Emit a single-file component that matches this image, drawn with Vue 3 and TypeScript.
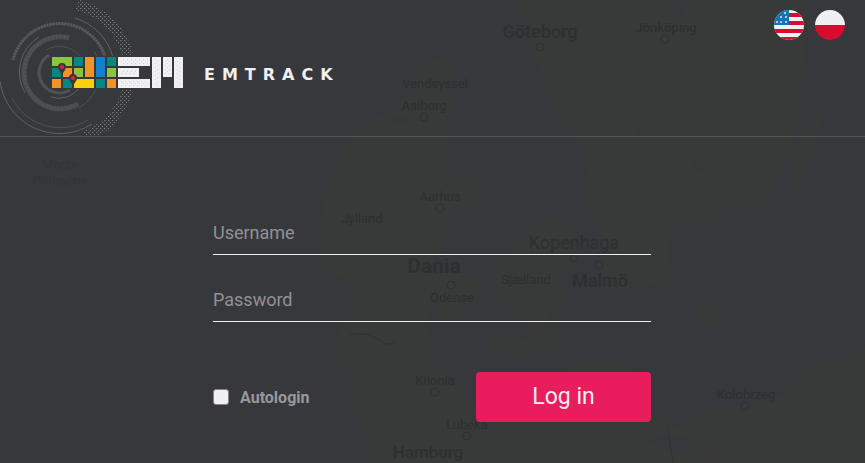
<script setup lang="ts">
import { ref } from 'vue'

interface MapLabel {
  name: string
  x: number
  y: number
  size: number
  weight: number
  faint?: boolean
}

interface Block {
  x: number
  y: number
  w: number
  h: number
  fill: string
}

const username = ref('')
const password = ref('')
const autologin = ref(false)
const language = ref<'en' | 'pl'>('en')

const labels: MapLabel[] = [
  { name: 'Göteborg', x: 540, y: 38, size: 18, weight: 500 },
  { name: 'Jönköping', x: 666, y: 32, size: 13, weight: 500 },
  { name: 'Vendsyssel', x: 435, y: 88, size: 13, weight: 400 },
  { name: 'Aalborg', x: 424, y: 110, size: 13, weight: 400 },
  { name: 'Aarhus', x: 440, y: 201, size: 13, weight: 400 },
  { name: 'Jylland', x: 362, y: 223, size: 13, weight: 400 },
  { name: 'Kopenhaga', x: 574, y: 249, size: 18, weight: 400 },
  { name: 'Dania', x: 434, y: 273, size: 21, weight: 700 },
  { name: 'Sjælland', x: 526, y: 284, size: 13, weight: 400 },
  { name: 'Malmö', x: 600, y: 287, size: 18, weight: 500 },
  { name: 'Odense', x: 452, y: 302, size: 13, weight: 400 },
  { name: 'Kilonia', x: 435, y: 385, size: 13, weight: 400 },
  { name: 'Kołobrzeg', x: 746, y: 399, size: 13, weight: 400 },
  { name: 'Lubeka', x: 467, y: 429, size: 13, weight: 400 },
  { name: 'Hamburg', x: 428, y: 458, size: 17, weight: 500 },
  { name: 'Morze', x: 60, y: 169, size: 13, weight: 400, faint: true },
  { name: 'Północne', x: 60, y: 185, size: 13, weight: 400, faint: true },
]

const towns: [number, number][] = [
  [540, 47], [665, 39], [424, 117], [440, 208], [574, 258], [599, 265],
  [451, 285], [435, 392], [745, 406], [467, 436],
]

const blocks: Block[] = [
  { x: 52, y: 57, w: 20, h: 9, fill: '#8bc53f' },
  { x: 74, y: 57, w: 9, h: 9, fill: '#078780' },
  { x: 85, y: 57, w: 9, h: 20, fill: '#f19327' },
  { x: 96, y: 57, w: 9, h: 20, fill: '#1280cc' },
  { x: 107, y: 57, w: 9, h: 9, fill: '#078780' },
  { x: 52, y: 68, w: 9, h: 9, fill: '#078780' },
  { x: 63, y: 68, w: 9, h: 9, fill: '#f19327' },
  { x: 74, y: 68, w: 9, h: 9, fill: '#8bc53f' },
  { x: 107, y: 68, w: 9, h: 9, fill: '#8bc53f' },
  { x: 52, y: 79, w: 9, h: 9, fill: '#f19327' },
  { x: 63, y: 79, w: 9, h: 9, fill: '#078780' },
  { x: 74, y: 79, w: 20, h: 9, fill: '#fccf0d' },
  { x: 96, y: 79, w: 9, h: 9, fill: '#078780' },
  { x: 107, y: 79, w: 9, h: 9, fill: '#f19327' },
  { x: 118, y: 57, w: 32, h: 9, fill: '#f0eff2' },
  { x: 118, y: 68, w: 21, h: 9, fill: '#f0eff2' },
  { x: 118, y: 79, w: 32, h: 9, fill: '#f0eff2' },
  { x: 152, y: 57, w: 9, h: 31, fill: '#f0eff2' },
  { x: 163, y: 57, w: 9, h: 20, fill: '#f0eff2' },
  { x: 174, y: 57, w: 9, h: 31, fill: '#f0eff2' },
]

const pins: [number, number][] = [[62, 67], [73, 78]]
</script>

<template>
  <div class="page">
    <svg class="map" viewBox="0 0 865 463" preserveAspectRatio="xMinYMin slice" aria-hidden="true">
      <g class="land">
        <path d="M465 43 452 60 455 85 449 115 447 155 448 182 462 172 480 181 472 203 452 208 443 218 441 250 430 262 436 288 428 318 430 348 431 368 452 384 462 398 482 410 515 402 535 392 555 378 580 362 605 356 628 362 640 395 655 418 672 430 700 416 720 409 745 405 782 395 800 371 832 360 865 348V463H370L366 425 350 395 352 372 336 352 342 326 354 310 347 290 340 276 322 270 323 210 330 175 352 140 370 119 392 112 414 88 428 61 450 57Z" />
        <path d="M522 0 528 28 536 62 545 80 553 100 568 122 580 140 592 158 582 184 588 204 600 224 606 250 604 275 616 289 660 284 675 272 668 262 668 240 680 226 708 217 738 207 763 206 774 186 784 158 793 140 795 102 807 76 803 45 807 0Z" />
        <path d="M516 14 525 8 527 17 518 21ZM482 96 493 88 490 97ZM830 84 816 118 795 150 792 172 795 202 804 172 818 130 833 87ZM697 299 714 309 721 320 714 326 697 316Z" />
        <path d="M502 262 512 244 535 235 550 215 565 220 573 238 574 262 560 283 565 301 550 312 540 332 524 320 505 306 496 282Z" />
        <path d="M430 274 452 269 476 280 474 304 458 324 440 314ZM484 342 500 334 530 340 556 326 570 330 548 346 526 360 504 356Z" />
      </g>
      <path class="water" d="M675 8 684 0H689L678 22 667 20ZM636 120 642 130 636 138ZM695 152 706 160 702 172 692 164ZM655 435 690 438 682 454 648 443ZM386 118 418 114 428 118 396 124Z" />
      <path class="roads" d="M534 0 537 36 549 95 570 125 586 146 597 180 595 215 606 244 630 236 670 223M537 51 606 48 659 43 605 44 660 39M665 43 662 110 650 150 625 190 605 205M605 151 650 144 700 130M798 0 799 100 789 145M430 60 434 85 424 117 412 150 439 207 405 223 395 258 395 325 420 370 428 425 428 463M325 271 347 274 396 272M450 288 485 292 537 285 574 259M538 288 534 325 538 365M370 400 400 423 425 430 467 440 520 432M665 432 702 441 720 463M745 407 784 401 815 382 865 375M784 401 800 440 815 463M745 410 732 440 716 463" />
      <path class="border" d="M350 334 365 334 378 339 385 344 390 344 396 341M667 430 669 437 673 463" />
      <g class="towns">
        <circle v-for="([cx, cy], i) in towns" :key="i" :cx="cx" :cy="cy" r="4" />
      </g>
      <g class="labels">
        <text v-for="label in labels" :key="label.name" :class="{ faint: label.faint }" :x="label.x" :y="label.y" :font-size="label.size" :font-weight="label.weight" text-anchor="middle">{{ label.name }}</text>
      </g>
    </svg>

    <header class="header">
      <a class="brand" href="#">
        <svg class="logo" viewBox="0 0 184 136" width="184" height="136" aria-hidden="true">
          <defs>
            <pattern id="dots" width="4" height="4" patternUnits="userSpaceOnUse">
              <rect width="1" height="1" fill="#7b7c7e" />
              <rect x="2" y="2" width="1" height="1" fill="#7b7c7e" />
              <rect x="1" width="1" height="1" fill="#505154" />
            </pattern>
            <pattern id="speckle" width="4" height="4" patternUnits="userSpaceOnUse">
              <rect x="1" y="1" width="1" height="1" fill="#e9ccd5" />
              <rect x="3" y="3" width="1" height="1" fill="#e9ccd5" />
            </pattern>
          </defs>
          <g fill="none" stroke="#606163">
            <path d="M77 5A69 69 0 0 1 84 137" stroke="url(#dots)" stroke-width="11" />
            <path d="M75 18A57 57 0 0 1 113 57" />
            <path d="M0 81A60 60 0 0 0 92 124" />
            <path d="M12 98A54 54 0 0 0 88 120" stroke="#505154" />
            <path d="M13 60A48 48 0 0 1 105 56" stroke="#4b4c4f" stroke-width="3" />
            <path d="M13 60A48 48 0 0 1 105 56" stroke-width="3" stroke-dasharray="1 2" />
            <path d="M39 37A41 41 0 0 0 25 93" />
            <path d="M69 38A36 36 0 1 0 78 104" stroke="#4b4c4f" stroke-width="5" />
            <path d="M69 38A36 36 0 1 0 78 104" stroke="#56575a" stroke-width="3" stroke-dasharray="1 3" />
            <path d="M46 50A27 27 0 0 1 80 56" stroke="#505154" />
            <path d="M49 55A20 20 0 1 0 70 90" stroke="#505154" stroke-width="3" />
            <path d="M51 97A25 25 0 0 0 79 88" />
            <path d="M95 52A42 42 0 0 1 79 108" stroke="#505154" />
          </g>
          <g stroke="#37383b" stroke-width="2" paint-order="stroke">
            <rect v-for="(b, i) in blocks" :key="i" :x="b.x" :y="b.y" :width="b.w" :height="b.h" :fill="b.fill" />
          </g>
          <path d="M120 59h28v5h-28zM120 70h17v5h-17zM120 81h28v5h-28zM154 59h5v27h-5zM165 59h5v16h-5zM176 59h5v27h-5z" fill="url(#speckle)" />
          <g v-for="([x, y], i) in pins" :key="i" :transform="`translate(${x} ${y})`">
            <path d="M0 8C-1 5-4 3-4 0A4 4 0 0 1 4 0C4 3 1 5 0 8Z" fill="#36373a" />
            <circle r="2" fill="#ee1d4f" />
          </g>
        </svg>
        <span class="wordmark">EMTRACK</span>
      </a>
      <nav class="languages" aria-label="Language">
        <button class="flag" type="button" aria-label="English" @click="language = 'en'">
          <svg viewBox="0 0 30 30" aria-hidden="true">
            <clipPath id="round-en"><circle cx="15" cy="15" r="15" /></clipPath>
            <g clip-path="url(#round-en)">
              <rect width="30" height="30" fill="#f0eff2" />
              <path d="M15 3h15v4H15zM15 11h15v4H15zM0 19h30v4H0zM0 27h30v3H0z" fill="#d80c2e" />
              <rect width="15" height="15" fill="#1573b9" />
              <path d="M10 2h2v2h-2zM6 6h2v2H6zM11 6h2v2h-2zM2 11h2v2H2zM6 11h2v2H6zM11 11h2v2h-2z" fill="#a9cbe6" />
            </g>
          </svg>
        </button>
        <button class="flag" type="button" aria-label="Polski" @click="language = 'pl'">
          <svg viewBox="0 0 30 30" aria-hidden="true">
            <clipPath id="round-pl"><circle cx="15" cy="15" r="15" /></clipPath>
            <g clip-path="url(#round-pl)">
              <rect width="30" height="15" fill="#f0eff2" />
              <rect y="15" width="30" height="15" fill="#d80c2e" />
            </g>
          </svg>
        </button>
      </nav>
    </header>

    <main class="main">
      <form class="form" @submit.prevent>
        <input v-model="username" class="field" type="text" name="username" placeholder="Username" aria-label="Username" />
        <input v-model="password" class="field" type="password" name="password" placeholder="Password" aria-label="Password" />
        <div class="actions">
          <label class="remember" for="autologin">
            <input id="autologin" v-model="autologin" class="tick" type="checkbox" />
            Autologin
          </label>
          <button class="submit" type="submit">Log in</button>
        </div>
      </form>
    </main>
  </div>
</template>

<style>
body {
  background: #37383c;
}
</style>

<style scoped>
.page {
  position: relative;
  isolation: isolate;
  display: flex;
  flex-direction: column;
  min-height: 100vh;
  overflow: hidden;
  font-family: Roboto, sans-serif;
  background: #37383c;
}

.map {
  position: absolute;
  inset: 0;
  z-index: -1;
  width: 100%;
  height: 100%;
}

.land {
  fill: #373a38;
  stroke: #393a37;
  stroke-width: 2;
}

.water {
  fill: #37383c;
}

.roads {
  fill: none;
  stroke: #3b3a36;
}

.border {
  fill: none;
  stroke: #2f3132;
}

.towns {
  fill: none;
  stroke: #2e3031;
}

.labels {
  fill: #2d2f30;
}

.faint {
  fill: #333437;
}

.header {
  display: flex;
  justify-content: space-between;
  border-bottom: 1px solid #515254;
}

.brand {
  display: flex;
  align-items: center;
  gap: 20px;
  color: #f0eff2;
  text-decoration: none;
}

.logo {
  display: block;
}

.wordmark {
  padding-top: 14px;
  font-family: "DejaVu Sans", sans-serif;
  font-size: 16px;
  font-weight: 700;
  line-height: 20px;
  letter-spacing: 7px;
}

.languages {
  display: flex;
  align-items: flex-start;
  gap: 11px;
  padding: 10px 20px;
}

.flag {
  display: block;
  width: 30px;
  height: 30px;
  padding: 0;
  border: 0;
  border-radius: 50%;
  background: none;
  cursor: pointer;
}

.flag svg {
  display: block;
}

.main {
  display: flex;
  justify-content: center;
  padding: 75px 21px 40px 20px;
}

.form {
  display: flex;
  flex-direction: column;
  gap: 24px;
  width: 100%;
  max-width: 438px;
}

.field {
  box-sizing: border-box;
  width: 100%;
  height: 43px;
  padding: 0 0 2px;
  border: 0;
  border-bottom: 1px solid #f0eff2;
  border-radius: 0;
  outline: 0;
  background: transparent;
  color: #f0eff2;
  font-family: inherit;
  font-size: 18px;
}

.field::placeholder {
  color: #919294;
  opacity: 1;
}

.actions {
  display: flex;
  align-items: center;
  justify-content: space-between;
  padding-top: 26px;
}

.remember {
  display: flex;
  align-items: center;
  gap: 11px;
  color: #97989a;
  font-size: 16px;
  font-weight: 700;
}

.tick {
  appearance: none;
  box-sizing: border-box;
  width: 16px;
  height: 16px;
  margin: 0;
  border: 1px solid #858386;
  border-radius: 3px;
  background: #f0eff2;
}

.tick:checked {
  background: #e91e5f;
}

.submit {
  width: 175px;
  height: 50px;
  padding: 0 0 2px;
  border: 0;
  border-radius: 4px;
  background: #e91c5d;
  color: #f0eff2;
  font-family: inherit;
  font-size: 23px;
  font-weight: 400;
  cursor: pointer;
}
</style>
